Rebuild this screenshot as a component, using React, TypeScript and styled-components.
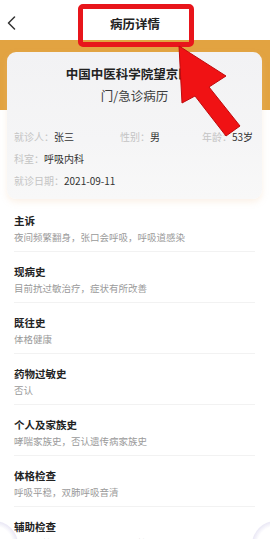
import React from "react";
import styled, { createGlobalStyle } from "styled-components";

const GlobalStyle = createGlobalStyle`
  html, body { margin: 0; padding: 0; background: #ffffff; }
  body { font-family: "Noto Sans CJK SC", "Noto Sans", sans-serif; }
  * { box-sizing: border-box; }
`;

const Screen = styled.div`
  position: relative;
  width: 270px;
  height: 539px;
  overflow: hidden;
  background: #ffffff;
`;

const NavBar = styled.div`
  height: 40px;
  display: grid;
  grid-template-columns: 40px 1fr 40px;
  align-items: center;
  padding-top: 6px;
  background: #ffffff;
`;

const BackButton = styled.div`
  display: flex;
  align-items: center;
  padding-left: 7px;
`;

const NavTitle = styled.div`
  text-align: center;
  font-size: 12.5px;
  font-weight: 700;
  color: #222;
`;

const HeaderBand = styled.div`
  padding: 12px 8px 0 7px;
  background: linear-gradient(to bottom, #e2a341 0, #e2a341 70px, #ffffff 70px);
`;

const Card = styled.div`
  border-radius: 9px;
  background: linear-gradient(to bottom, #f2f2f4 0%, #f5f5f6 60%, #f8f8f8 100%);
  padding: 13px 7px 8px 7px;
  box-shadow: 0 3px 6px rgba(240, 200, 160, 0.25);
`;

const Hospital = styled.div`
  text-align: center;
  font-size: 12.5px;
  font-weight: 700;
  line-height: 17px;
  color: #222;
`;

const RecordType = styled.div`
  text-align: center;
  font-size: 12.5px;
  line-height: 18px;
  margin-top: 5px;
  color: #3a3a3a;
`;

const InfoGrid = styled.div`
  margin-top: 20px;
  display: grid;
  grid-template-columns: 106px 82px 1fr;
  grid-auto-rows: 22px;
  align-items: center;
`;

const InfoCell = styled.div<{ $span?: number }>`
  grid-column: span ${(p) => p.$span ?? 1};
  font-size: 10px;
  white-space: nowrap;
`;

const Label = styled.span`
  color: #c4c4c4;
`;

const Value = styled.span`
  color: #333;
`;

const SectionList = styled.div`
  padding: 2px 15px 0 14px;
`;

const Section = styled.div`
  padding: 12px 0 6px;
  border-bottom: 1px solid #f2f2f2;
`;

const SectionTitle = styled.div`
  font-size: 10.5px;
  font-weight: 700;
  line-height: 16px;
  color: #222;
`;

const SectionText = styled.div`
  font-size: 9.5px;
  line-height: 16px;
  color: #9a9a9a;
`;

const HighlightBox = styled.div`
  position: absolute;
  left: 78px;
  top: 4px;
  width: 116px;
  height: 43px;
  border: 5px solid #e8151b;
  border-radius: 5px;
  pointer-events: none;
`;

const ArrowLayer = styled.svg`
  position: absolute;
  left: 0;
  top: 0;
  pointer-events: none;
`;

const Corner = styled.div<{ $side: "left" | "right" }>`
  position: absolute;
  bottom: -30px;
  ${(p) => (p.$side === "left" ? "left: -30px;" : "right: -30px;")}
  width: 48px;
  height: 48px;
  border-radius: 50%;
  background: radial-gradient(circle, rgba(200, 195, 230, 0) 55%, rgba(200, 195, 230, 0.5) 75%);
  pointer-events: none;
`;

const sections = [
  { title: "主诉", text: "夜间频繁翻身，张口会呼吸，呼吸道感染" },
  { title: "现病史", text: "目前抗过敏治疗，症状有所改善" },
  { title: "既往史", text: "体格健康" },
  { title: "药物过敏史", text: "否认" },
  { title: "个人及家族史", text: "哮喘家族史，否认遗传病家族史" },
  { title: "体格检查", text: "呼吸平稳，双肺呼吸音清" },
  { title: "辅助检查", text: "过敏原检测、血常规及肺功能检查" },
];

export default function App() {
  return (
    <>
      <GlobalStyle />
      <Screen>
        <NavBar>
          <BackButton>
            <svg width="9" height="14" viewBox="0 0 9 14">
              <polyline points="7.5,1 1.5,7 7.5,13" fill="none" stroke="#333" strokeWidth="1.5" strokeLinecap="round" strokeLinejoin="round" />
            </svg>
          </BackButton>
          <NavTitle>病历详情</NavTitle>
          <div />
        </NavBar>
        <HeaderBand>
          <Card>
            <Hospital>中国中医科学院望京医院</Hospital>
            <RecordType>门/急诊病历</RecordType>
            <InfoGrid>
              <InfoCell><Label>就诊人：</Label><Value>张三</Value></InfoCell>
              <InfoCell><Label>性别：</Label><Value>男</Value></InfoCell>
              <InfoCell><Label>年龄：</Label><Value>53岁</Value></InfoCell>
              <InfoCell $span={3}><Label>科室：</Label><Value>呼吸内科</Value></InfoCell>
              <InfoCell $span={3}><Label>就诊日期：</Label><Value>2021-09-11</Value></InfoCell>
            </InfoGrid>
          </Card>
        </HeaderBand>
        <SectionList>
          {sections.map((s) => (
            <Section key={s.title}>
              <SectionTitle>{s.title}</SectionTitle>
              <SectionText>{s.text}</SectionText>
            </Section>
          ))}
        </SectionList>
        <HighlightBox />
        <ArrowLayer width="270" height="539" viewBox="0 0 270 539">
          <polygon
            points="179,46 226,76 209,87 240,126 226,136 195,96 182,103"
            fill="#f01214"
            stroke="#c00a0c"
            strokeWidth="1"
            strokeLinejoin="round"
          />
        </ArrowLayer>
        <Corner $side="left" />
        <Corner $side="right" />
      </Screen>
    </>
  );
}
